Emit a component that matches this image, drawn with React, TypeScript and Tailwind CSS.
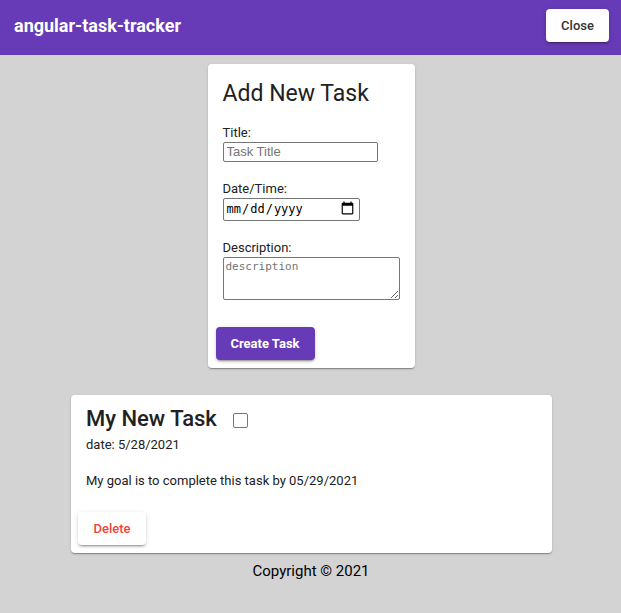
import React from "react";

const raised =
  "h-[33px] rounded text-[13px] shadow-[0_3px_1px_-2px_rgba(0,0,0,0.2),0_2px_2px_0_rgba(0,0,0,0.14),0_1px_5px_0_rgba(0,0,0,0.12)]";

const card =
  "rounded bg-white shadow-[0_2px_1px_-1px_rgba(0,0,0,0.2),0_1px_1px_0_rgba(0,0,0,0.14),0_1px_3px_0_rgba(0,0,0,0.12)]";

const field = "block rounded-[2px] border border-[#767676] bg-white";

function Header() {
  return (
    <header className="flex h-[55px] items-center justify-between bg-[#673ab7] pr-3 pb-1 pl-3.5">
      <h1 className="text-[18px] leading-6 font-bold text-white">angular-task-tracker</h1>
      <button type="button" className={`${raised} w-[63px] bg-white font-medium text-[#333333]`}>
        Close
      </button>
    </header>
  );
}

function TaskForm() {
  return (
    <form
      className={`${card} mx-auto w-[207px] px-2 pt-3.5 pb-2`}
      onSubmit={(e) => e.preventDefault()}
    >
      <div className="px-[7px]">
        <h2 className="text-[23px] leading-8">Add New Task</h2>
        <label htmlFor="title" className="mt-3.5 block leading-[18px]">
          Title:
        </label>
        <input
          id="title"
          type="text"
          placeholder="Task Title"
          className={`${field} h-5 w-[155px] px-[3px] pb-[2px] font-['Liberation_Sans',Arial,sans-serif] text-[13px] placeholder:text-[#757575]`}
        />
        <label htmlFor="date" className="mt-[18px] block leading-[18px]">
          Date/Time:
        </label>
        <input
          id="date"
          type="date"
          className={`${field} h-[23px] w-[137px] pr-1 pb-[2px] pl-[2px] font-['DejaVu_Sans_Mono',monospace] text-[12px] text-black [&::-webkit-calendar-picker-indicator]:size-[15px] [&::-webkit-calendar-picker-indicator]:p-0`}
        />
        <label htmlFor="description" className="mt-[18px] block leading-[18px]">
          Description:
        </label>
        <textarea
          id="description"
          placeholder="description"
          className={`${field} h-[43px] w-[177px] p-[2px] font-['DejaVu_Sans_Mono',monospace] text-[11px] leading-[14px] placeholder:text-[#757575]`}
        />
      </div>
      <button type="submit" className={`${raised} mt-[27px] block w-[99px] bg-[#673ab7] font-bold text-white`}>
        Create Task
      </button>
    </form>
  );
}

function TaskCard() {
  return (
    <article className={`${card} mr-[69px] ml-[70px] mt-[27px] px-[7px] pt-2 pb-2`}>
      <div className="px-2">
        <div className="flex items-center gap-4">
          <h2 className="text-[22px] leading-8 font-medium">My New Task</h2>
          <input
            type="checkbox"
            aria-label="Task done"
            className="mt-[3px] size-[15px] appearance-none rounded-[2px] border border-[#767676] bg-white checked:bg-[#673ab7]"
          />
        </div>
        <p className="leading-5">date: 5/28/2021</p>
        <p className="mt-4 leading-5">My goal is to complete this task by 05/29/2021</p>
      </div>
      <button type="button" className={`${raised} mt-[21px] block w-[68px] bg-white font-medium text-[#f44336]`}>
        Delete
      </button>
    </article>
  );
}

export default function App() {
  return (
    <div className="min-h-screen bg-[#d3d3d3] font-[Roboto,sans-serif] text-[13px] text-[#212121]">
      <Header />
      <main className="pt-[9px] pl-px">
        <TaskForm />
        <TaskCard />
      </main>
      <footer className="mt-2 pl-px text-center text-[15px] leading-5 text-black">Copyright © 2021</footer>
    </div>
  );
}
